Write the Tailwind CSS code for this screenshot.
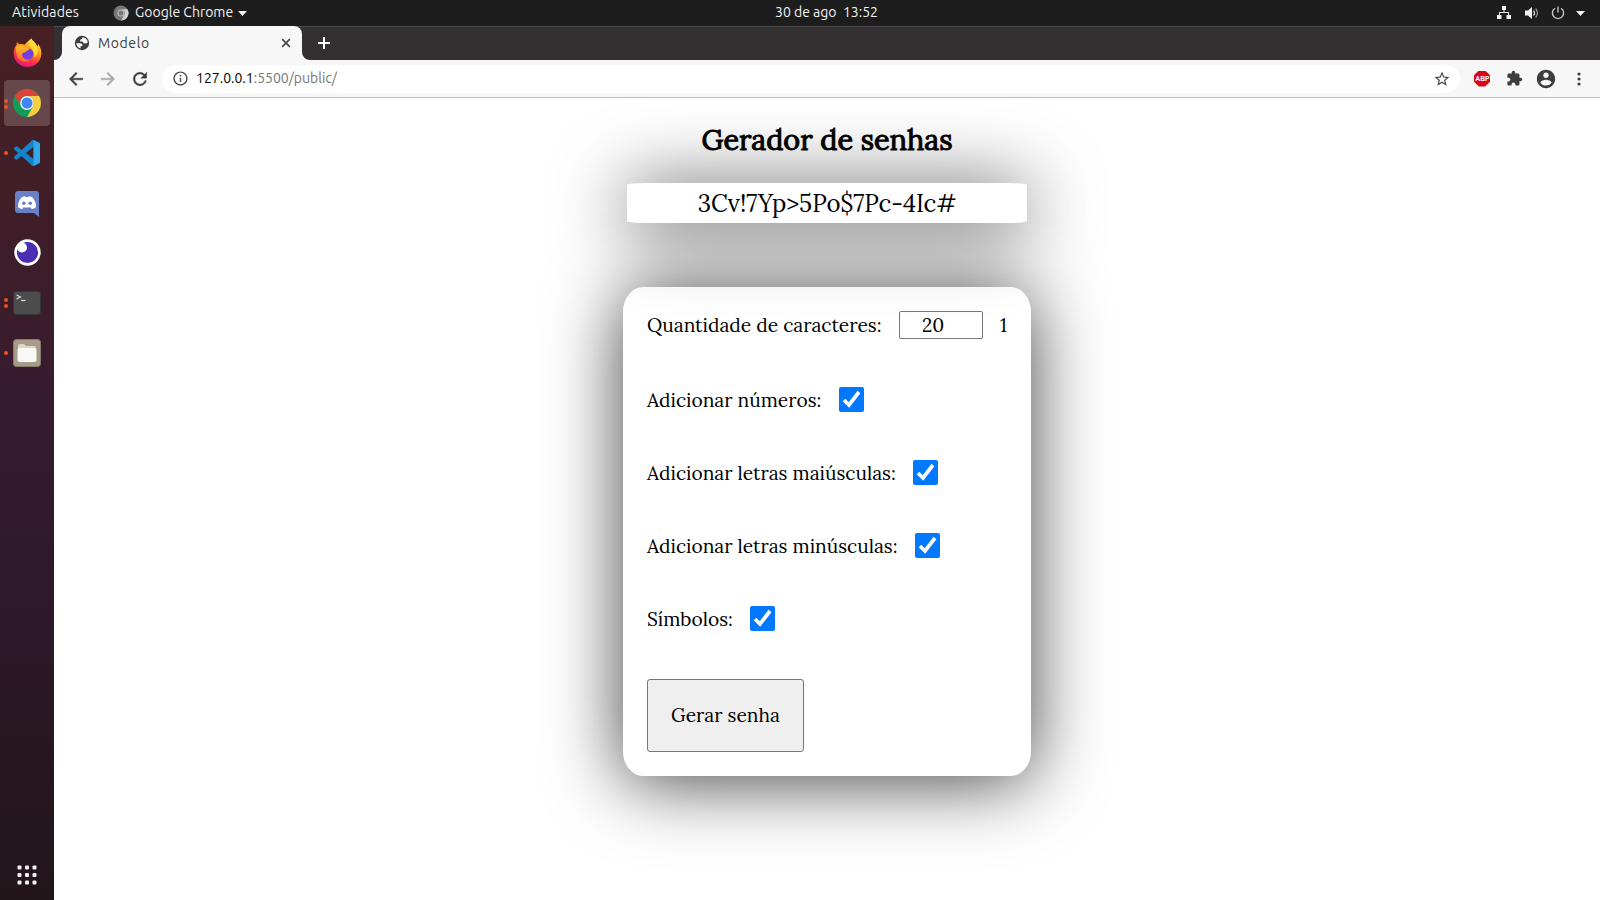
<!DOCTYPE html>
<html lang="pt-BR">
<head>
<meta charset="utf-8">
<title>Modelo</title>
<script src="https://cdn.jsdelivr.net/npm/@tailwindcss/browser@4"></script>
</head>
<body class="w-[1600px] h-[900px] overflow-hidden bg-white flex flex-col text-black">

<!-- Top bar -->
<header class="h-[26px] shrink-0 bg-[#1d1d1d] flex items-center text-[#f2f2f2] font-[Ubuntu,'Open_Sans',sans-serif] text-[14px] leading-[24px]">
  <span class="ml-3 w-[101px] pb-0.5 whitespace-nowrap tracking-[0.15px]">Atividades</span>
  <svg class="w-4 h-4" viewBox="0 0 16 16"><circle cx="8" cy="8" r="7.5" fill="#777"/><path d="M8 4.200h6.500A7.500 7.500 0 0 1 8 15.500l3.300-5.600A3.800 3.800 0 0 0 8 4.200z" fill="#d0d0d0"/><circle cx="8" cy="8" r="3.600" fill="#c4c4c4"/><circle cx="8" cy="8" r="2.600" fill="#777"/></svg>
  <span class="w-[109px] pl-1.5 pb-0.5 whitespace-nowrap">Google Chrome</span>
  <svg class="w-[9px] h-[5px]" viewBox="0 0 9 5"><path d="M0 0h9L4.500 5z" fill="#f2f2f2"/></svg>
  <span class="ml-[528px] w-[104px] pb-0.5 whitespace-pre">30 de ago  13:52</span>
  <svg class="ml-[618px] mb-px w-[14px] h-[13px]" viewBox="0 0 14 13"><path d="M5 0h4v4H7.500v2H12v3h2v4h-4.500V9H11V7H3v2h1.500v4H0V9h2V6h4.500V4H5z" fill="#f2f2f2"/></svg>
  <svg class="ml-[14px] mb-px w-[14px] h-[14px]" viewBox="0 0 14 14"><path d="M0 4.500h3L7 1v12L3 9.500H0z" fill="#f2f2f2"/><path d="M8.600 4.500q1.800 2.500 0 5" fill="none" stroke="#e8e8e8" stroke-width="1.200"/><path d="M10.600 2.500q3.800 4.500 0 9" fill="none" stroke="#999" stroke-width="1.200"/></svg>
  <svg class="ml-[12px] mb-px w-[14px] h-[14px]" viewBox="0 0 14 14" fill="none" stroke="#c8c8c8" stroke-width="1.300"><path d="M4 2.200a5.600 5.600 0 1 0 6 0M7 .5v6"/></svg>
  <svg class="ml-[11px] w-[9px] h-[5px]" viewBox="0 0 9 5"><path d="M0 0h9L4.500 5z" fill="#f2f2f2"/></svg>
</header>

<div class="flex grow min-h-0">

  <!-- Dock -->
  <aside class="w-[54px] shrink-0 bg-linear-to-b from-[#472022] via-[#351a30] to-[#21151a] flex flex-col items-center pt-[2px]">
    <div class="h-[50px] w-full flex items-center justify-center pb-px">
      <svg class="w-[29px] h-[30px]" viewBox="0 0 30 30">
        <defs>
          <linearGradient id="fx" x1=".8" y1="0" x2=".3" y2="1"><stop offset="0" stop-color="#fff44f"/><stop offset=".4" stop-color="#ff980e"/><stop offset=".7" stop-color="#ff3647"/><stop offset="1" stop-color="#e31587"/></linearGradient>
          <linearGradient id="fo" x1="0" y1="0" x2="0" y2="1"><stop offset="0" stop-color="#ffbd2e"/><stop offset="1" stop-color="#ff6a28"/></linearGradient>
        </defs>
        <path d="M19 0c1 2.500 5 4.500 6 8.500 1-.6 1-2 .8-3C28.500 9 29.300 12 29.300 15.500a14.300 13.800 0 0 1-28.600 0c0-4 1-7 3-9L4 3.500c1.200.8 2 1.600 2.500 2.500 2-.6 4-.3 5.500.5C13 5 16.500 2 19 0z" fill="url(#fx)"/>
        <circle cx="15" cy="16" r="6" fill="#7040e0"/>
        <path d="M3 9c3-2.500 7-2 9 0 1.500 1 4 .5 5 1.500-.5 2-3.500 2-4 3.500-1 1-2.500 .5-3.500 1.500-1 4 3 7.500 8 6-3 3.500-9 3.500-12-1C4 18 3 14 3 9z" fill="url(#fo)"/>
        <path d="M19 0c1 2.500 5 4.500 6 8.500 1.500 4.500 0 9.500-3.500 11.500 1.500-4 .5-7-1.500-9-3-2.500-4.500-6-1-11z" fill="#ffd93a"/>
      </svg>
    </div>
    <div class="relative h-[50px] w-full flex items-center justify-center">
      <div class="w-[46px] h-[46px] rounded-[4px] bg-[#65474c] flex items-center justify-center">
        <svg class="w-[28px] h-[28px]" viewBox="0 0 28 28"><circle cx="14" cy="14" r="14" fill="#0f9d58"/><path d="M1.900 7A14 14 0 0 1 26.100 7H14a7 7 0 0 0-6.100 10.500z" fill="#db4437"/><path d="M26.100 7A14 14 0 0 1 14 28l6.060-10.500A7 7 0 0 0 14 7z" fill="#ffcd40"/><circle cx="14" cy="14" r="6.900" fill="#f1f1f1"/><circle cx="14" cy="14" r="5.500" fill="#4285f4"/></svg>
      </div>
      <span class="absolute left-1 top-[21px] w-1 h-1 rounded-full bg-[#e95420]"></span>
      <span class="absolute left-1 top-[27px] w-1 h-1 rounded-full bg-[#e95420]"></span>
    </div>
    <div class="relative h-[50px] w-full flex items-center justify-center">
      <svg class="w-[26px] h-[26px]" viewBox="0 0 24 24"><path fill="#1583cc" d="M23.150 2.587L18.210.21a1.494 1.494 0 0 0-1.705.29l-9.460 8.630-4.120-3.128a.999.999 0 0 0-1.276.057L.327 7.261A1 1 0 0 0 .326 8.740L3.899 12 .326 15.260a1 1 0 0 0 .001 1.479L1.650 17.940a.999.999 0 0 0 1.276.057l4.120-3.128 9.460 8.630a1.492 1.492 0 0 0 1.704.29l4.942-2.377A1.500 1.500 0 0 0 24 20.060V3.939a1.500 1.500 0 0 0-.85-1.352zm-5.146 14.861L10.826 12l7.178-5.448v10.896z"/><path fill="#2fa8ee" d="M18 .1l5.150 2.487A1.500 1.500 0 0 1 24 3.939V20.060a1.500 1.500 0 0 1-.85 1.350L18 23.900z"/></svg>
      <span class="absolute left-1 top-[23px] w-1 h-1 rounded-full bg-[#e95420]"></span>
    </div>
    <div class="h-[50px] w-full flex items-center justify-center pt-0.5">
      <svg class="w-[24px] h-[26px]" viewBox="0 0 24 26"><path d="M3 0h18a3 3 0 0 1 3 3v23l-5-4H3a3 3 0 0 1-3-3V3a3 3 0 0 1 3-3z" fill="#6a80c6"/><path d="M6.500 6.500c1.500-1 2.800-1.300 3.500-1.300l.5.700h3l.5-.7c.7 0 2 .3 3.500 1.300 2.500 3 3.700 6 3.500 9.700-1.700 1.300-3 1.700-4.300 1.800l-1.200-1.700c-2.300.4-4.700.4-7 0L7.300 18c-1.300-.1-2.600-.5-4.300-1.800C2.800 12.500 4 9.500 6.500 6.500z" fill="#fff"/><circle cx="8.800" cy="12.200" r="1.800" fill="#6a80c6"/><circle cx="15.200" cy="12.200" r="1.800" fill="#6a80c6"/></svg>
    </div>
    <div class="h-[50px] w-full flex items-center justify-center pb-px">
      <svg class="w-[27px] h-[27px]" viewBox="0 0 27 27"><circle cx="13.500" cy="13.500" r="13.200" fill="#fff"/><circle cx="13.500" cy="13.500" r="10.600" fill="#4a2fb5"/><circle cx="8" cy="8.500" r="5" fill="#fff"/></svg>
    </div>
    <div class="relative h-[50px] w-full flex items-center justify-center">
      <svg class="w-[28px] h-[24px]" viewBox="0 0 28 24"><rect x=".5" y=".5" width="27" height="23" rx="2.500" fill="#4c4c4c" stroke="#363636"/><path d="M3.500 4l4 2-4 2" fill="none" stroke="#ddd" stroke-width="1.200"/><path d="M8 9.500h4.500" stroke="#ddd" stroke-width="1.200"/></svg>
      <span class="absolute left-1 top-[20px] w-1 h-1 rounded-full bg-[#e95420]"></span>
      <span class="absolute left-1 top-[26px] w-1 h-1 rounded-full bg-[#e95420]"></span>
    </div>
    <div class="relative h-[50px] w-full flex items-center justify-center">
      <svg class="w-[28px] h-[28px]" viewBox="0 0 28 28"><rect x=".5" y=".5" width="27" height="27" rx="3" fill="#a69c87" stroke="#857c6b"/><path d="M5 7a2 2 0 0 1 2-2h4l2 2h8a2 2 0 0 1 2 2v11H5z" fill="#ddd6c9"/><rect x="4.500" y="9" width="19" height="14" rx="2" fill="#faf9f7"/></svg>
      <span class="absolute left-1 top-[23px] w-1 h-1 rounded-full bg-[#e95420]"></span>
    </div>
    <svg class="mt-auto mb-[15px] w-[20px] h-[20px]" viewBox="0 0 20 20" fill="#f2f2f2"><rect x=".5" y=".5" width="4" height="4" rx="1"/><rect x="8" y=".5" width="4" height="4" rx="1"/><rect x="15.500" y=".5" width="4" height="4" rx="1"/><rect x=".5" y="8" width="4" height="4" rx="1"/><rect x="8" y="8" width="4" height="4" rx="1"/><rect x="15.500" y="8" width="4" height="4" rx="1"/><rect x=".5" y="15.500" width="4" height="4" rx="1"/><rect x="8" y="15.500" width="4" height="4" rx="1"/><rect x="15.500" y="15.500" width="4" height="4" rx="1"/></svg>
  </aside>

  <!-- Browser window -->
  <div class="grow flex flex-col min-w-0">
    <div class="h-[34px] shrink-0 bg-[#333031] border-t border-[#4b4849] flex items-end font-[Ubuntu,'Open_Sans',sans-serif] text-[14px]">
      <svg class="w-2 h-2" viewBox="0 0 8 8"><path d="M8 0v8H0a8 8 0 0 0 8-8z" fill="#f7f7f7"/></svg>
      <div class="w-[240px] h-[34px] -mt-px shrink-0 bg-[#f7f7f7] rounded-t-[8px] flex items-center text-[#3c4043]">
        <svg class="ml-[12px] w-4 h-4" viewBox="0 0 16 16"><circle cx="8" cy="8" r="7.200" fill="#3c4043"/><path d="M2.300 8.300H6c1.800 0 2.700.9 2.500 2.600H6.600v2.600A5.800 5.800 0 0 1 2.300 8.300zM8.900 2.300C8.300 2.700 8 3.200 8 3.900c-1.500 0-2.100.9-1.900 2.600h2.700c0 1.300.8 1.900 2.300 1.900.9 0 1.700-.3 2.600-.7a5.800 5.800 0 0 0-4.800-5.400z" fill="#f7f7f7"/></svg>
        <span class="ml-[8px] w-[175px] tracking-[0.6px]">Modelo</span>
        <svg class="w-[16px] h-[16px] ml-[5px]" viewBox="0 0 16 16" stroke="#46484b" stroke-width="1.700"><path d="M4.200 4.200l7.600 7.600M11.800 4.200l-7.600 7.600"/></svg>
      </div>
      <svg class="w-2 h-2" viewBox="0 0 8 8"><path d="M0 0v8h8a8 8 0 0 1-8-8z" fill="#f7f7f7"/></svg>
      <svg class="ml-2 mb-[11px] w-[12px] h-[12px]" viewBox="0 0 12 12" stroke="#fff" stroke-width="2"><path d="M6 0v12M0 6h12"/></svg>
    </div>

    <div class="h-[38px] shrink-0 bg-[#f7f7f7] border-b border-[#bfbfbf] flex items-center font-[Ubuntu,'Open_Sans',sans-serif] text-[14px]">
      <svg class="ml-[12px] w-5 h-5" viewBox="0 0 24 24" fill="#3c3d3f" stroke="#3c3d3f" stroke-width=".5"><path d="M20 11H7.830l5.590-5.590L12 4l-8 8 8 8 1.410-1.410L7.830 13H20v-2z"/></svg>
      <svg class="ml-[12px] w-5 h-5" viewBox="0 0 24 24" fill="#a8a8a8" stroke="#a8a8a8" stroke-width=".5"><path d="M12 4l-1.410 1.410L16.170 11H4v2h12.170l-5.580 5.590L12 20l8-8z"/></svg>
      <svg class="ml-[12px] w-5 h-5" viewBox="0 0 24 24" fill="#3c3d3f" stroke="#3c3d3f" stroke-width=".5"><path d="M17.650 6.350A7.958 7.958 0 0 0 12 4c-4.420 0-7.990 3.580-7.990 8s3.570 8 7.990 8c3.730 0 6.840-2.550 7.730-6h-2.080A5.990 5.990 0 0 1 12 18c-3.310 0-6-2.690-6-6s2.690-6 6-6c1.660 0 3.140.69 4.220 1.780L13 11h7V4l-2.350 2.350z"/></svg>
      <div class="ml-[12px] w-[1298px] h-7 rounded-full bg-white flex items-center">
        <svg class="ml-[9.500px] w-[17px] h-[17px]" viewBox="0 0 24 24" fill="#46484b"><path d="M11 17h2v-6h-2v6zm1-15C6.480 2 2 6.480 2 12s4.480 10 10 10 10-4.480 10-10S17.520 2 12 2zm0 18c-4.410 0-8-3.590-8-8s3.590-8 8-8 8 3.590 8 8-3.590 8-8 8zM11 9h2V7h-2v2z"/></svg>
        <span class="ml-[7.500px] text-[#757575] whitespace-nowrap"><span class="text-black">127.0.0.1</span>:5500/public/</span>
        <svg class="ml-auto mr-[9px] w-[18px] h-[18px]" viewBox="0 0 24 24" fill="#46484b"><path d="M22 9.240l-7.190-.62L12 2 9.190 8.630 2 9.240l5.460 4.730L5.820 21 12 17.270 18.180 21l-1.630-7.030L22 9.240zM12 15.400l-3.760 2.270 1-4.280-3.320-2.880 4.380-.38L12 6.100l1.710 4.040 4.380.38-3.320 2.880 1 4.280L12 15.400z"/></svg>
      </div>
      <div class="ml-[14px] w-4 h-4 bg-[#d9061a] [clip-path:polygon(30%_0,70%_0,100%_30%,100%_70%,70%_100%,30%_100%,0_70%,0_30%)] flex items-center justify-center">
        <span class="text-white font-bold text-[8px] leading-none font-['Liberation_Sans',sans-serif] scale-x-[.85]">ABP</span>
      </div>
      <svg class="ml-[15.500px] w-[17px] h-[17px]" viewBox="0 0 24 24" fill="#3c3d3f"><path d="M20.500 11H19V7c0-1.100-.9-2-2-2h-4V3.500a2.500 2.500 0 0 0-5 0V5H4c-1.100 0-1.990.9-1.990 2v3.800H3.500c1.490 0 2.700 1.210 2.700 2.700s-1.210 2.700-2.700 2.700H2V20c0 1.100.9 2 2 2h3.800v-1.500c0-1.490 1.210-2.700 2.700-2.700 1.490 0 2.700 1.210 2.700 2.700V22H17c1.100 0 2-.9 2-2v-4h1.500a2.500 2.500 0 0 0 0-5z"/></svg>
      <svg class="ml-[12.500px] w-[22px] h-[22px]" viewBox="0 0 24 24" fill="#3c3d3f"><path d="M12 2C6.480 2 2 6.480 2 12s4.480 10 10 10 10-4.480 10-10S17.520 2 12 2zm0 3c1.660 0 3 1.340 3 3s-1.340 3-3 3-3-1.340-3-3 1.340-3 3-3zm0 14.200a7.200 7.200 0 0 1-6-3.220c.03-1.990 4-3.080 6-3.080 1.990 0 5.970 1.090 6 3.080a7.200 7.200 0 0 1-6 3.220z"/></svg>
      <svg class="ml-[12.500px] w-[18px] h-[18px]" viewBox="0 0 18 18" fill="#3c3d3f"><circle cx="9" cy="4" r="1.600"/><circle cx="9" cy="9" r="1.600"/><circle cx="9" cy="14" r="1.600"/></svg>
    </div>

    <!-- Page -->
    <main class="grow flex flex-col items-center overflow-hidden bg-white font-[Lora,'Liberation_Serif',serif]">
      <div class="w-[400px] h-10 mt-[85px] shrink-0 bg-white rounded-[5%] shadow-[0_5px_75px_rgba(0,0,0,0.75)] flex items-center justify-center text-[24px] leading-[40px] relative">
        <h1 class="absolute -top-[64px] h-[42px] leading-[42px] text-[28.800px] font-normal [-webkit-text-stroke:1px_black] whitespace-nowrap">Gerador de senhas</h1>
        <span class="pt-0.5">3Cv!7Yp&gt;5Po$7Pc-4Ic#</span>
      </div>
      <form class="w-[408px] mt-16 p-6 shrink-0 rounded-[5%] shadow-[0_5px_75px_rgba(0,0,0,0.75)] flex flex-col items-start gap-12 text-[19.200px] leading-[25px]">
        <div class="h-7 flex items-center">
          <span class="w-[252px]">Quantidade de caracteres:</span>
          <span class="w-[84px] h-7 rounded-[2px] border border-[#767676] bg-white pl-[22px] leading-[26px]">20</span>
          <span class="ml-[17px]">1</span>
        </div>
        <div class="h-[25px] flex items-center">
          <span class="w-[192px] pt-0.5">Adicionar números:</span>
          <svg class="w-[25px] h-[25px]" viewBox="0 0 25 25"><rect width="25" height="25" rx="2" fill="#0078ff"/><path d="M5 13l5 5L20 5" fill="none" stroke="#fff" stroke-width="3.700"/></svg>
        </div>
        <div class="h-[25px] flex items-center">
          <span class="w-[266px] pt-0.5">Adicionar letras maiúsculas:</span>
          <svg class="w-[25px] h-[25px]" viewBox="0 0 25 25"><rect width="25" height="25" rx="2" fill="#0078ff"/><path d="M5 13l5 5L20 5" fill="none" stroke="#fff" stroke-width="3.700"/></svg>
        </div>
        <div class="h-[25px] flex items-center">
          <span class="w-[268px] pt-0.5">Adicionar letras minúsculas:</span>
          <svg class="w-[25px] h-[25px]" viewBox="0 0 25 25"><rect width="25" height="25" rx="2" fill="#0078ff"/><path d="M5 13l5 5L20 5" fill="none" stroke="#fff" stroke-width="3.700"/></svg>
        </div>
        <div class="h-[25px] flex items-center">
          <span class="w-[103px] pt-0.5">Símbolos:</span>
          <svg class="w-[25px] h-[25px]" viewBox="0 0 25 25"><rect width="25" height="25" rx="2" fill="#0078ff"/><path d="M5 13l5 5L20 5" fill="none" stroke="#fff" stroke-width="3.700"/></svg>
        </div>
        <button type="button" class="w-[157px] h-[73px] rounded-[3px] border border-[#767676] bg-[#efefef]">Gerar senha</button>
      </form>
    </main>
  </div>
</div>
</body>
</html>
